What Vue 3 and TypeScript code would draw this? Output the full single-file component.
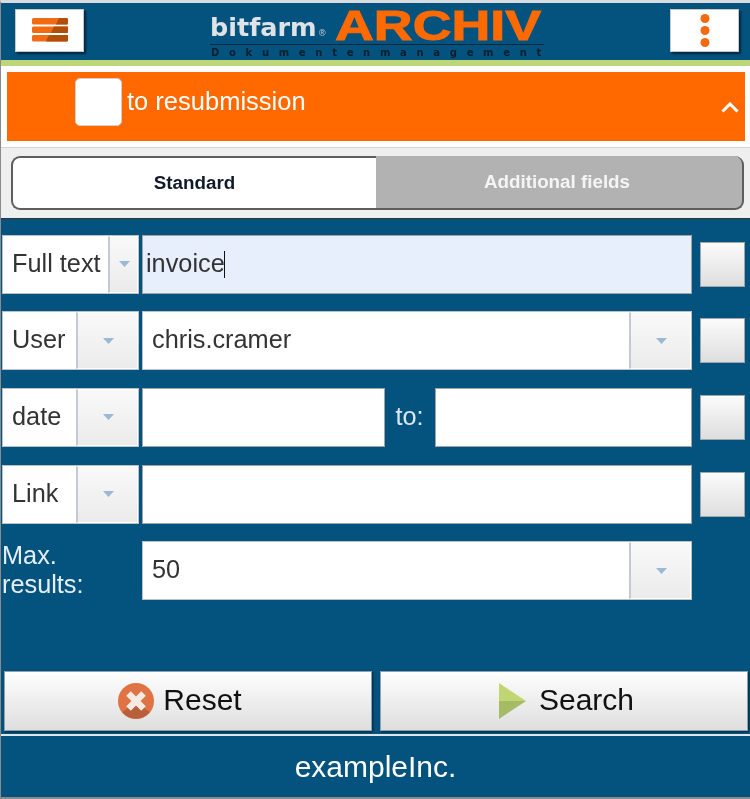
<script setup lang="ts">
interface Row { label: string; split: number }
const chevron = 'M0 0h11l-5.5 6z'
const selects: Row[] = [
  { label: 'User', split: 74 },
  { label: 'date', split: 74 },
  { label: 'Link', split: 74 },
]
</script>

<template>
  <div class="page">
    <header class="header">
      <button class="head-btn" aria-label="Menu">
        <svg width="38" height="25" viewBox="0 1 38 25">
          <rect x="1" y="1" width="36" height="6.5" rx="1.5" fill="#f26a12" />
          <rect x="1" y="9.5" width="36" height="6.5" rx="1.5" fill="#f26a12" />
          <rect x="1" y="18" width="36" height="6.5" rx="1.5" fill="#f26a12" />
          <path d="M28 1h7.5q1.500 0 1.500 1.500v3.500q0 1.500-1.500 1.500H25zM23 9.500h14v5q0 1.500-1.500 1.500H20zM18 18h19v5q0 1.500-1.500 1.500H15z" fill="#b04e0c" />
        </svg>
      </button>
      <div class="logo">
        <div class="logo-top">
          <span class="bitfarm">bitfarm<small>®</small></span>
          <span class="archiv">ARCHIV</span>
        </div>
        <div class="logo-sub">Dokumentenmanagement</div>
      </div>
      <button class="head-btn" aria-label="More">
        <svg width="12" height="35" viewBox="0 0 12 35">
          <circle cx="6" cy="5.500" r="4.500" fill="#f26a12" />
          <circle cx="6" cy="17.500" r="4.500" fill="#f26a12" />
          <circle cx="6" cy="29.500" r="4.500" fill="#f26a12" />
        </svg>
      </button>
    </header>
    <div class="green"></div>

    <section class="banner-wrap">
      <div class="banner">
        <span class="banner-check"></span>
        <span class="banner-text">to resubmission</span>
        <svg class="banner-chev" width="18" height="11" viewBox="0 0 18 11">
          <path d="M1.500 9.500L9 2l7.500 7.500" fill="none" stroke="#fff" stroke-width="3" />
        </svg>
      </div>
    </section>

    <nav class="tabs">
      <div class="tab active">Standard</div>
      <div class="tab inactive">Additional fields</div>
    </nav>

    <main class="form">
      <div class="rows">
        <div class="row">
          <div class="field select-wide">
            <span class="value">Full text</span>
            <span class="arrow narrow"><svg width="11" height="6" viewBox="0 0 11 6"><path :d="chevron" fill="#9bb8d6" /></svg></span>
          </div>
          <div class="field grow focus"><span class="value typed">invoice<i class="caret"></i></span></div>
          <span class="check"></span>
        </div>

        <div class="row">
          <div class="field select-wide">
            <span class="value">{{ selects[0].label }}</span>
            <span class="arrow"><svg width="11" height="6" viewBox="0 0 11 6"><path :d="chevron" fill="#9bb8d6" /></svg></span>
          </div>
          <div class="field grow">
            <span class="value">chris.cramer</span>
            <span class="arrow"><svg width="11" height="6" viewBox="0 0 11 6"><path :d="chevron" fill="#9bb8d6" /></svg></span>
          </div>
          <span class="check"></span>
        </div>

        <div class="row">
          <div class="field select-wide">
            <span class="value">{{ selects[1].label }}</span>
            <span class="arrow"><svg width="11" height="6" viewBox="0 0 11 6"><path :d="chevron" fill="#9bb8d6" /></svg></span>
          </div>
          <div class="field from plain"></div>
          <span class="to">to:</span>
          <div class="field until plain"></div>
          <span class="check"></span>
        </div>

        <div class="row">
          <div class="field select-wide">
            <span class="value">{{ selects[2].label }}</span>
            <span class="arrow"><svg width="11" height="6" viewBox="0 0 11 6"><path :d="chevron" fill="#9bb8d6" /></svg></span>
          </div>
          <div class="field grow plain"></div>
          <span class="check"></span>
        </div>

        <div class="row">
          <div class="max-label">Max.<br />results:</div>
          <div class="field grow">
            <span class="value">50</span>
            <span class="arrow"><svg width="11" height="6" viewBox="0 0 11 6"><path :d="chevron" fill="#9bb8d6" /></svg></span>
          </div>
          <span class="check-spacer"></span>
        </div>
      </div>

      <div class="actions">
        <button class="action reset">
          <svg width="36" height="36" viewBox="0 0 36 36">
            <circle cx="18" cy="18" r="18" fill="#df7344" />
            <path d="M4 29a18 18 0 0 0 28 0L18 20z" fill="#b9603a" />
            <path d="M10.500 10.500l15 15M25.500 10.500l-15 15" stroke="#f3ebe4" stroke-width="6.500" />
          </svg>
          <span class="label">Reset</span>
        </button>
        <button class="action search">
          <svg width="27" height="36" viewBox="0 0 27 36">
            <path d="M0 0l27 18H0z" fill="#bfd673" />
            <path d="M0 36l27-18H0z" fill="#a6bb66" />
          </svg>
          <span class="label">Search</span>
        </button>
      </div>
    </main>

    <footer class="footer">exampleInc.</footer>
  </div>
</template>

<style>
html, body { margin: 0; background: #fff; }
</style>

<style scoped>
.page {
  width: 750px;
  height: 799px;
  display: flex;
  flex-direction: column;
  overflow: hidden;
  font-family: "Liberation Sans", Arial, sans-serif;
  box-sizing: border-box;
  border-top: 3px solid #d8dcdf;
  border-bottom: 2px solid #8b8b8b;
  background: #04537f;
  border-left: 1px solid #8b8b8b;
  filter: blur(0.35px);
}
button { font-family: inherit; padding: 0; cursor: pointer; }
.header {
  height: 57px;
  flex: none;
  background: #04537f;
  display: flex;
  align-items: center;
  justify-content: space-between;
  padding: 0 11px 2px 14px;
  box-sizing: border-box;
}
.head-btn {
  width: 69px;
  height: 43px;
  flex: none;
  background: #fff;
  border: 1px solid #c8c8c8;
  box-shadow: 2px 2px 2px #02263c;
  display: flex;
  align-items: center;
  justify-content: center;
}
.logo { width: 334px; align-self: flex-start; margin-top: 6px; }
.logo-top {
  display: flex;
  align-items: flex-end;
  height: 35px;
  border-bottom: 1px solid #06283f;
}
.bitfarm {
  font-family: "DejaVu Sans", sans-serif;
  font-weight: 700;
  font-size: 25.500px;
  line-height: 30px;
  color: #dfe3e6;
  width: 125px;
  flex: none;
  white-space: nowrap;
  margin-bottom: -4px;
}
.bitfarm small { font-size: 9px; font-weight: 400; color: #b6c4cd; margin-left: 1px; }
.archiv {
  font-weight: 700;
  font-size: 43px;
  line-height: 49px;
  color: #ff6a00;
  white-space: nowrap;
  transform: scaleX(1.25);
  transform-origin: left bottom;
  -webkit-text-stroke: 1px #ff6a00;
  margin-bottom: -6px;
}
.logo-sub {
  font-family: "DejaVu Sans", sans-serif;
  font-size: 10px;
  line-height: 13px;
  font-weight: 700;
  color: #0c1e2a;
  letter-spacing: 9.700px;
  white-space: nowrap;
  margin: 1px -12px 0 1px;
}
.green { height: 6px; flex: none; background: #bcd679; }
.banner-wrap {
  flex: none;
  background: #fff;
  padding: 6px 5px 6px 6px;
}
.banner {
  height: 69px;
  background: #ff6900;
  display: flex;
  align-items: center;
  position: relative;
  padding-left: 68px;
}
.banner-check {
  width: 47px;
  height: 48px;
  background: #fff;
  border: 1px solid #d8d0c8;
  border-radius: 5px;
  box-sizing: border-box;
  margin-top: -10px;
}
.banner-text {
  color: #fff;
  font-size: 25.500px;
  margin-left: 5px;
  margin-top: -11px;
}
.banner-chev { position: absolute; right: 6px; top: 30px; }
.tabs {
  height: 72px;
  flex: none;
  box-sizing: border-box;
  background: #efefef;
  border-top: 1px solid #d4d4d4;
  border-bottom: 1px solid #333;
  padding: 8px 5px 8px 10px;
  display: flex;
}
.tab {
  display: flex;
  align-items: center;
  justify-content: center;
  font-weight: 700;
  font-size: 18.800px;
  box-sizing: border-box;
  flex: none;
}
.active {
  width: 365px;
  background: #fff;
  color: #111a2a;
  border: 2px solid #5e5e5e;
  border-right: 0;
  border-radius: 9px 0 0 9px;
}
.inactive {
  width: 368px;
  padding-right: 4px;
  background: #b2b2b2;
  color: #f5f5f5;
  border-right: 2px solid #5e5e5e;
  border-bottom: 2px solid #5e5e5e;
  border-radius: 0 9px 9px 0;
}
.form {
  flex: 1;
  background: #04537f;
  display: flex;
  flex-direction: column;
  justify-content: space-between;
  padding: 15.900px 1px 3px 3px;
  border-bottom: 2px solid #dfe7ec;
}
.rows { display: flex; flex-direction: column; gap: 17.550px; margin-left: -2px; }
.row { display: flex; align-items: center; gap: 3px; height: 59px; }
.field {
  height: 59px;
  background: #fff;
  border: 1px solid #b9c2c9;
  box-sizing: border-box;
  display: flex;
  align-items: center;
  font-size: 25.300px;
  color: #333;
}
.select-wide { width: 137px; flex: none; }
.row > .grow { flex: 0 0 550px; }
.from { width: 243px; flex: none; }
.until { width: 257px; flex: none; }
.focus { background: #e8effc; border-color: #a0a4a8; }
.plain { border-color: #a0a4a8; }
.value { padding-left: 9px; padding-bottom: 2px; flex: 1; white-space: nowrap; }
.typed { padding-left: 3px; }
.caret {
  display: inline-block;
  width: 1px;
  height: 27px;
  background: #111;
  vertical-align: -6px;
  margin-left: -1px;
}
.arrow {
  width: 62px;
  height: 100%;
  flex: none;
  box-sizing: border-box;
  border-left: 2px solid #c3cad6;
  border-right: 1px solid #fff;
  border-top: 1px solid #fff;
  border-bottom: 1px solid #fff;
  padding-left: 2px;
  background: linear-gradient(#f9f9f9, #ebebeb);
  display: flex;
  align-items: center;
  justify-content: center;
}
.narrow { width: 30px; }
.check {
  width: 45px;
  height: 45px;
  flex: none;
  margin-left: 5px;
  box-sizing: border-box;
  border: 1px solid #9fa5a9;
  background: linear-gradient(#fbfbfb, #dedede);
}
.check-spacer { width: 45px; margin-left: 5px; flex: none; }
.to {
  width: 43px;
  margin-right: 1px;
  flex: none;
  text-align: center;
  color: #dbe7ef;
  font-size: 25.300px;
  padding-bottom: 2px;
}
.max-label {
  width: 137px;
  flex: none;
  color: #e6eff5;
  font-size: 25.300px;
  line-height: 29px;
  margin-top: -2px;
}
.actions { display: flex; gap: 8px; }
.action {
  width: 368px;
  height: 60px;
  border: 1px solid #8fa1ad;
  box-shadow: 1px 1px 2px #02263c;
  background: linear-gradient(#fefefe, #dedede);
  display: flex;
  align-items: center;
  justify-content: center;
  font-size: 30px;
  color: #111;
}
.label { padding-bottom: 2px; }
.reset { gap: 9px; padding-right: 16px; }
.search { gap: 13px; padding-left: 5px; }
.footer {
  height: 61px;
  flex: none;
  background: #04537f;
  color: #fff;
  font-size: 30px;
  display: flex;
  align-items: center;
  justify-content: center;
}
</style>
